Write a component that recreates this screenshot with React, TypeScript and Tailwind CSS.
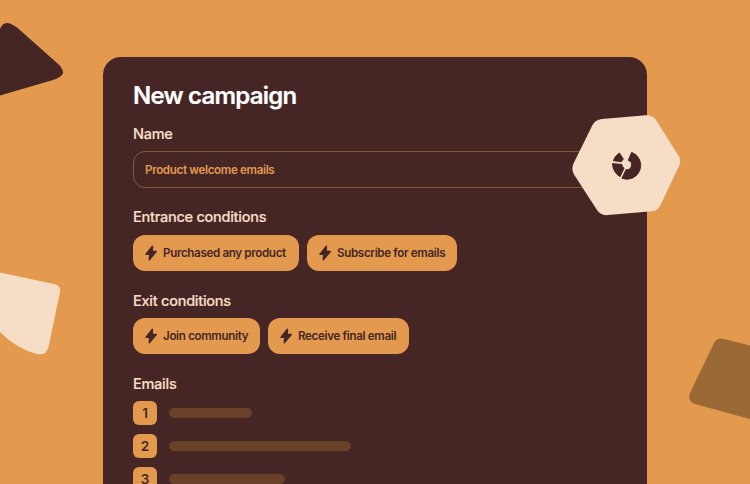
function Bolt() {
  return (
    <svg className="h-4 w-3 shrink-0 overflow-visible" viewBox="0 0 12 16" fill="currentColor" stroke="currentColor" strokeWidth="1.4" strokeLinejoin="round">
      <path d="M7.4 1.2 1 9.2H4.7L4.3 14.8 11.3 6.5H7.3L7.4 1.2Z" />
    </svg>
  );
}

function Label({ children }: { children: string }) {
  return <h2 className="h-5 text-[14.5px] leading-5 font-medium tracking-[-0.25px] text-[#f6dec6] [-webkit-text-stroke:0.2px]">{children}</h2>;
}

function Pill({ text, size }: { text: string; size: string }) {
  return (
    <div className={`flex h-9 items-center gap-1.5 rounded-xl bg-[#e39a4e] pl-3 text-[#452625] ${size}`}>
      <Bolt />
      <span className="pt-px text-[11.6px] leading-[17px] font-semibold whitespace-nowrap tracking-[-0.34px]">{text}</span>
    </div>
  );
}

function Email({ n, bar }: { n: number; bar: string }) {
  return (
    <li className="flex items-center gap-3">
      <span className="flex size-6 items-center justify-center rounded-md bg-[#e39a4e] text-[13.5px] leading-6 font-semibold text-[#452625]">{n}</span>
      <span className={`h-2.5 rounded-[5px] bg-[#694128] ${bar}`} />
    </li>
  );
}

export default function App() {
  return (
    <div className="relative h-[484px] w-[750px] overflow-hidden bg-[#e39a4e] pt-[57px] pl-[103px] font-['Inter',sans-serif]">
      <main className="h-[460px] w-[544px] rounded-[18px] bg-[#452625] px-[30px] pt-[23px]">
        <h1 className="h-8 text-[24px] leading-8 font-semibold tracking-[-0.79px] text-white [-webkit-text-stroke:0.2px]">New campaign</h1>
        <section className="mt-3">
          <Label>Name</Label>
          <div className="mt-[7px] flex h-[37px] items-center rounded-xl border border-[#855930] pl-[11px] text-[11.6px] font-semibold tracking-[-0.34px] text-[#e39a4e]">
            <span className="pt-px leading-[17px]">Product welcome emails</span>
          </div>
        </section>
        <section className="mt-[19px]">
          <Label>Entrance conditions</Label>
          <div className="mt-2 flex gap-2">
            <Pill text="Purchased any product" size="w-[166px]" />
            <Pill text="Subscribe for emails" size="w-[150px]" />
          </div>
        </section>
        <section className="mt-5">
          <Label>Exit conditions</Label>
          <div className="mt-[7px] flex gap-2">
            <Pill text="Join community" size="w-[127px]" />
            <Pill text="Receive final email" size="w-[141px]" />
          </div>
        </section>
        <section className="mt-5">
          <Label>Emails</Label>
          <ul className="mt-[7px] flex flex-col gap-[9px]">
            <Email n={1} bar="w-[83px]" />
            <Email n={2} bar="w-[182px]" />
            <Email n={3} bar="w-[116px]" />
          </ul>
        </section>
      </main>
      <svg className="pointer-events-none absolute inset-0" width="750" height="484" viewBox="0 0 750 484">
        <path fill="#452625" d="M-2 32 L1 27 Q5 20 13 25 Q17 27 21 31 L57 63 Q63 68 63 73 Q62 77 53 80 L-2 96Z" />
        <path fill="#f6dec6" d="M-2 272 L55 284.3 Q61 286 60 292 L48.5 347 Q46 356 37 354 Q16 349 -2 330Z" />
        <path fill="#9a6935" d="M752 346 L724 339 Q717 337 714 343 L690 393 Q687 401 695 404 L752 419.5Z" />
        <path fill="#f6dec6" d="M602 119 L643 115.5 Q652 114.5 656 120 L678 155 Q682 160 679 166 L661 204 Q658 211 652 211.3 L608 215 Q601 216 597 210 L574 174.5 Q571 169 573.5 163.5 L592 126 Q595 119.5 602 119Z" />
        <g transform="translate(560 100) scale(.33333)" fill="#452625" stroke="#452625" strokeWidth="3" strokeLinejoin="round">
          <path d="M178 159 L190 177 Q186 181 185 185 L160 182 Q164 168 178 159Z" />
          <path d="M157.5 191 L185 193 Q187 201 192 205 L180 230 Q159 217 157.5 191Z" />
          <path d="M215 157 A41.5 41.5 0 1 1 186 235 L198 209 A14.5 14.5 0 0 0 205 181Z" />
        </g>
      </svg>
    </div>
  );
}
